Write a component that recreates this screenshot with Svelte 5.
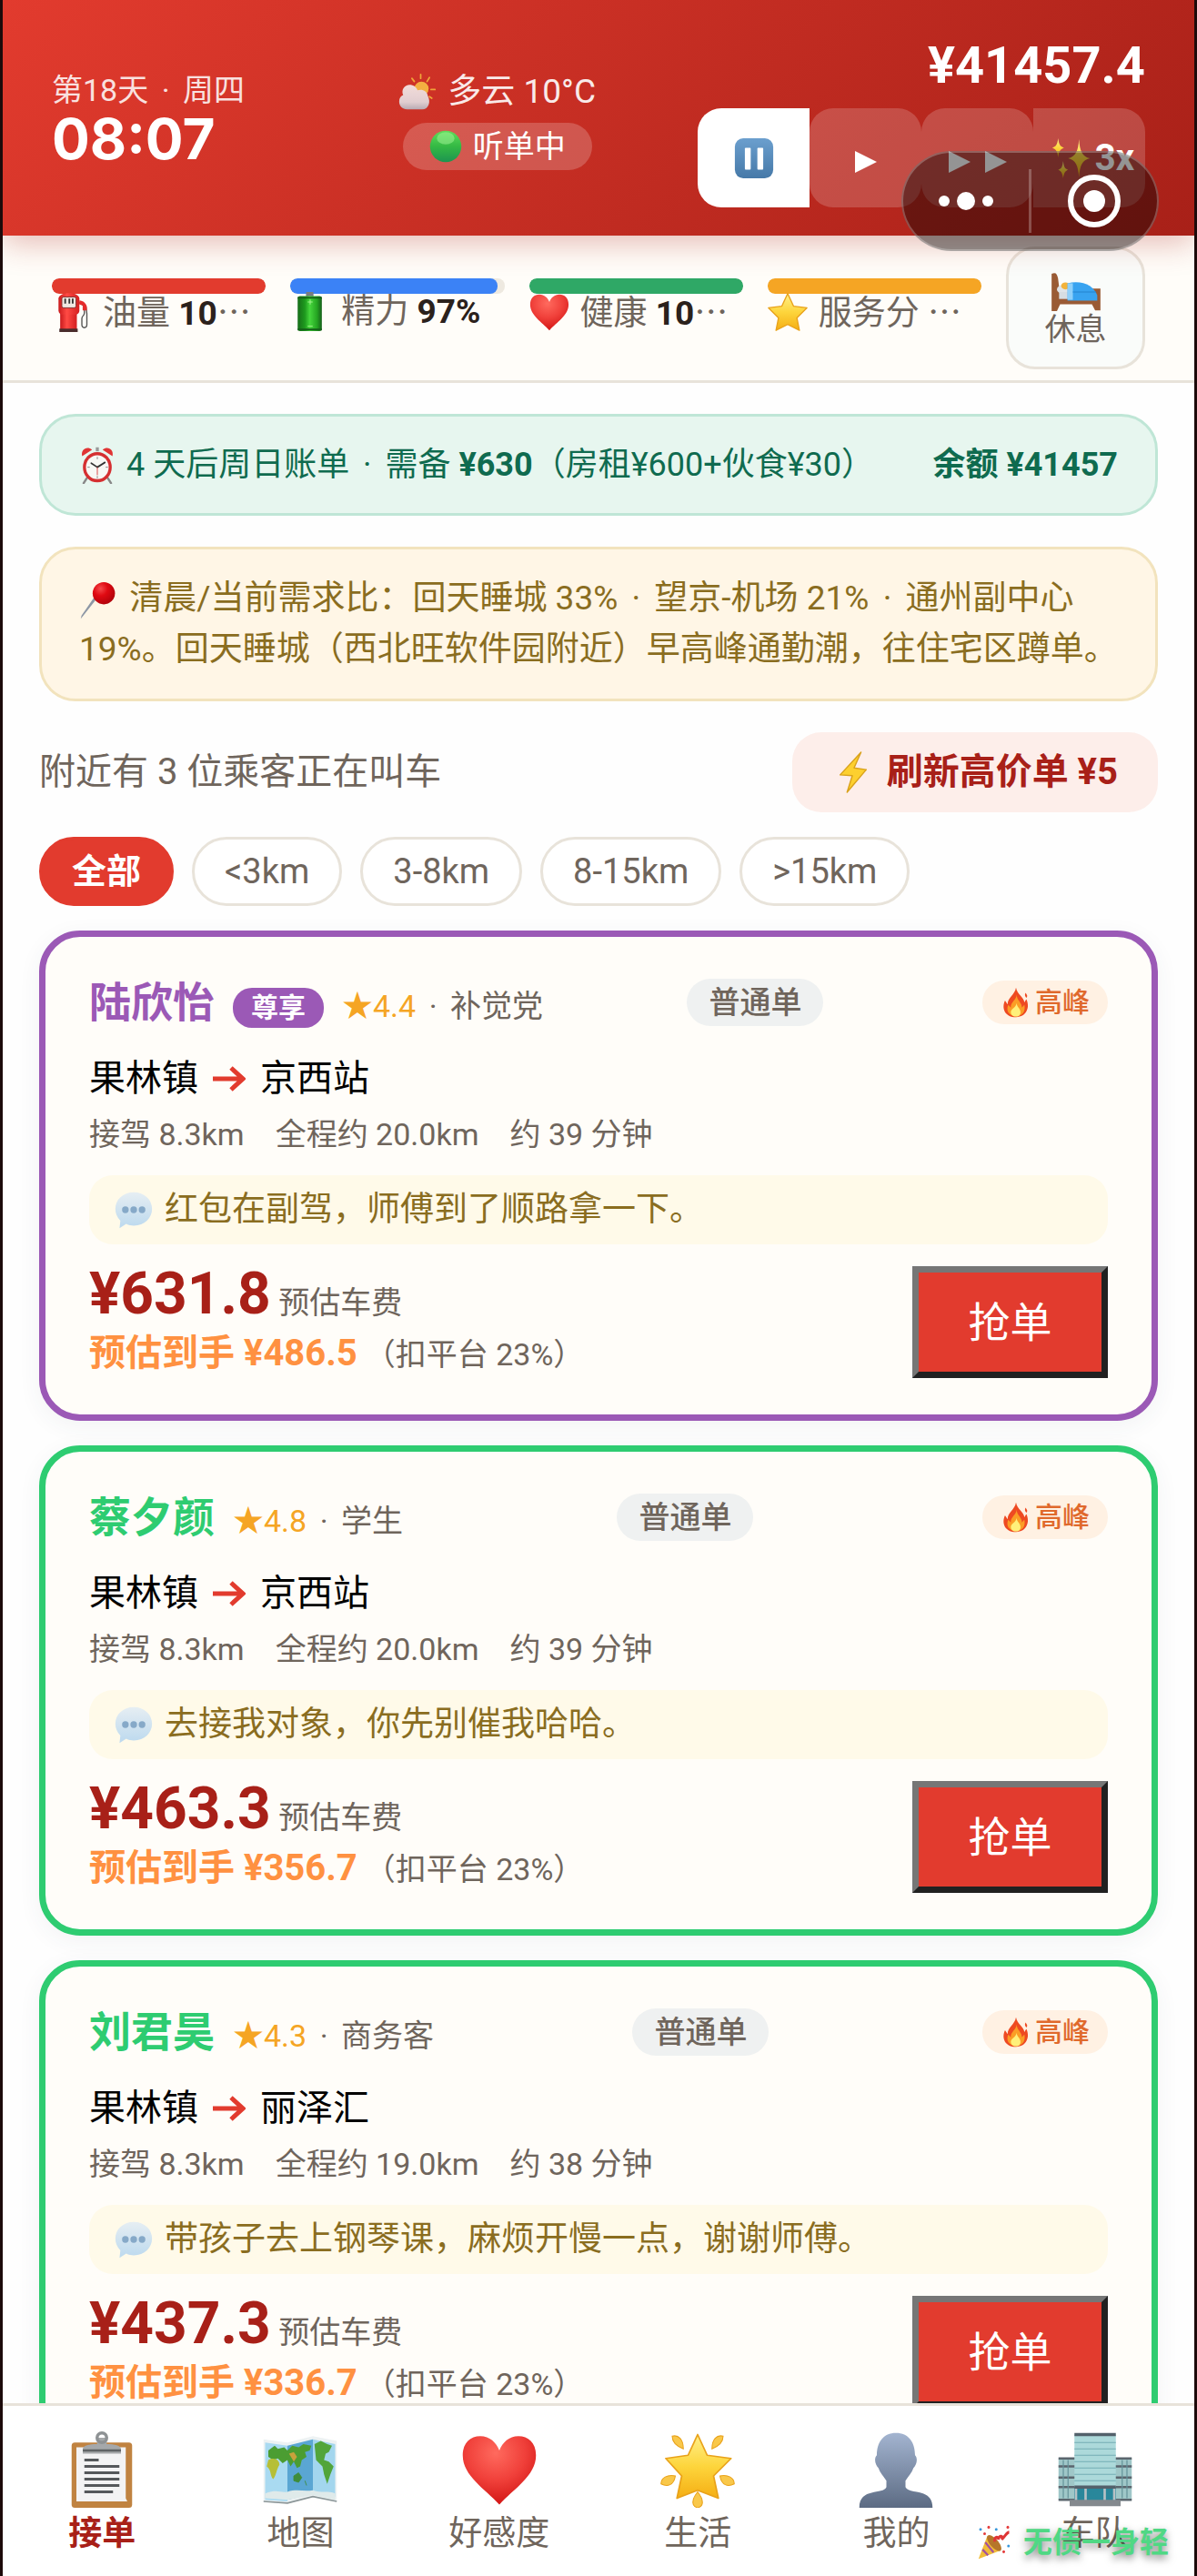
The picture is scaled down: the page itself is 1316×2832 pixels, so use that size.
<script>
  const speeds = ['pause', 'play', 'fast', 'turbo'];
  const speedLabels = { pause: '暂停', play: '正常速度', fast: '两倍速度' };

  let speed = $state('pause');
  let filter = $state('全部');
  let tab = $state('接单');

  const stats = [
    { icon: 'fuel', label: '油量', value: '10', cut: true, percent: 100, color: '#e23b2e' },
    { icon: 'battery', label: '精力', value: '97%', cut: false, percent: 97, color: '#3b82f6' },
    { icon: 'heart', label: '健康', value: '10', cut: true, percent: 100, color: '#2fa866' },
    { icon: 'star', label: '服务分', value: '', cut: true, percent: 100, color: '#f5a524' }
  ];

  const filters = ['全部', '<3km', '3-8km', '8-15km', '>15km'];

  const orders = [
    {
      name: '陆欣怡', vip: true, rating: '4.4', kind: '补觉党',
      from: '果林镇', to: '京西站', trip: '20.0', minutes: 39,
      note: '红包在副驾，师傅到了顺路拿一下。', fare: '631.8', net: '486.5'
    },
    {
      name: '蔡夕颜', vip: false, rating: '4.8', kind: '学生',
      from: '果林镇', to: '京西站', trip: '20.0', minutes: 39,
      note: '去接我对象，你先别催我哈哈。', fare: '463.3', net: '356.7'
    },
    {
      name: '刘君昊', vip: false, rating: '4.3', kind: '商务客',
      from: '果林镇', to: '丽泽汇', trip: '19.0', minutes: 38,
      note: '带孩子去上钢琴课，麻烦开慢一点，谢谢师傅。', fare: '437.3', net: '336.7'
    }
  ];

  const tabs = [
    { icon: 'clipboard', label: '接单' },
    { icon: 'map', label: '地图' },
    { icon: 'heart', label: '好感度' },
    { icon: 'glow', label: '生活' },
    { icon: 'person', label: '我的' },
    { icon: 'building', label: '车队' }
  ];
</script>

<svelte:head>
  <title>接单</title>
</svelte:head>

{#snippet dot()}<span class="dot">·</span>{/snippet}

{#snippet icon(name)}
  <svg class="icon" viewBox="0 0 48 48" preserveAspectRatio="none" aria-hidden="true">
    {#if name === 'weather'}
      <g stroke="#f3b13c" stroke-width="2" stroke-linecap="round">
        <path d="M28 2v5M17 7l3 4M39 6l-3 5M46 21h-5M42 32l-3-2" />
      </g>
      <circle cx="29" cy="20" r="9" fill="#f8bd45" />
      <path d="M11 46c-6 0-10-4-10-10 0-4 2-7 5-8-3-7 2-13 8-13 5 0 9 3 10 7 6-2 12 1 13 7 4 7 1 17-7 17z" fill="url(#g-cloud)" />
    {:else if name === 'dot'}
      <circle cx="24" cy="24" r="23" fill="url(#g-dot)" />
      <ellipse cx="24" cy="12" rx="13" ry="9" fill="#a5f59a" opacity=".5" />
    {:else if name === 'pause'}
      <rect x="1" y="1" width="46" height="46" rx="10" fill="url(#g-blue)" />
      <rect x="13" y="12" width="7" height="25" rx="1" fill="#fff" />
      <rect x="28" y="12" width="7" height="25" rx="1" fill="#fff" />
    {:else if name === 'sparkles'}
      <g fill="url(#g-gold)">
        <path d="M33 2c1 14 4 20 13 22-9 2-12 8-13 22-1-14-4-20-13-22 9-2 12-8 13-22z" />
        <path d="M8 1c1 7 2 9 7 11-5 2-6 4-7 11-1-7-2-9-7-11 5-2 6-4 7-11z" />
        <path d="M14 27c1 7 2 9 6 10-4 2-5 4-6 10-1-6-2-8-6-10 4-1 5-3 6-10z" />
      </g>
    {:else if name === 'fuel'}
      <path d="M32 12l7 5v8c0 4-3 3-3 7v7c0 5 6 5 6 0V26l-1-8" fill="none" stroke="#555" stroke-width="1.5" />
      <path d="M33 10c4 0 9 4 9 8v4h-5v-6l-4-1z" fill="#e52b2b" />
      <rect x="10" y="24" width="20" height="21" fill="url(#g-red)" />
      <path d="M8 8c0-9 25-9 25 0v14c0 4-3 5-5 5H13c-3 0-5-2-5-5z" fill="url(#g-red)" />
      <rect x="12" y="6" width="17" height="13" rx="2" fill="#f0e8e2" stroke="#7b2a2a" />
      <path d="M16 8v6M21 8v6M25 8v6" stroke="#333" stroke-width="2" />
      <rect x="9" y="44" width="22" height="4" fill="#4a2c2c" />
    {:else if name === 'battery'}
      <rect x="19" y="0" width="9" height="7" rx="1" fill="#777d80" />
      <rect x="9" y="5" width="29" height="42" rx="3" fill="url(#g-battery)" />
      <path d="M9 7h29M9 45h29" stroke="#155f19" stroke-width="2" />
      <path d="M21 12h6M24 9v6M21 41h6" stroke="#a6f58f" />
    {:else if name === 'heart'}
      <path d="M24 46C15 36 1 28 1 15 1 7 6 3 12 3c6 0 10 4 12 9 2-5 6-9 12-9 6 0 11 4 11 12 0 13-14 21-23 31z" fill="url(#g-heart)" />
    {:else if name === 'star'}
      <path d="M24 2l7 15 16 2-12 12 3 15-14-7-14 7 3-15L1 19l16-2z" fill="url(#g-gold)" stroke="#e9a21a" stroke-width="1.5" stroke-linejoin="round" />
    {:else if name === 'bed'}
      <path d="M1 3c4-2 5 0 6 5l2 19h30v-7h8v25h-5l-3-7H9l-3 8H1z" fill="#9a5b35" />
      <ellipse cx="12" cy="21" rx="6" ry="5" fill="#dfe4e8" />
      <circle cx="14" cy="17" r="4" fill="#f2b33b" />
      <path d="M8 24h12v8H8z" fill="#d7dde2" />
      <path d="M16 14c14-4 25 3 28 14v6H16z" fill="#38a3f0" />
      <path d="M16 14h5v19h-5z" fill="#8fd0fa" />
      <path d="M21 24h22" stroke="#2283cc" />
    {:else if name === 'alarm'}
      <path d="M10 41l-4 6M38 41l4 6" stroke="#888" stroke-width="3" stroke-linecap="round" />
      <path d="M4 13c-2-8 6-13 13-8zM44 13c2-8-6-13-13-8z" fill="#e03434" />
      <path d="M24 2v5" stroke="#999" stroke-width="4" />
      <circle cx="24" cy="27" r="19" fill="#d52f31" />
      <circle cx="24" cy="27" r="15" fill="#f8f8f5" />
      <path d="M24 27l-8-5M24 27l10-6" stroke="#333" stroke-width="2" stroke-linecap="round" />
      <path d="M24 27v10" stroke="#d52f31" />
      <path d="M24 14v3M24 38v3M11 27h3M35 27h3" stroke="#777" />
    {:else if name === 'pin'}
      <path d="M22 22L3 46l-1 1 1-4 16-23z" fill="#8d97a5" />
      <circle cx="31" cy="15" r="14" fill="url(#g-pin)" />
    {:else if name === 'bolt'}
      <path d="M33 1L9 27l14 1-6 19 22-26-14-2z" fill="#fdd02f" stroke="#d9a21c" stroke-width="1.5" stroke-linejoin="round" />
    {:else if name === 'fire'}
      <path d="M24 1c2 11 12 14 13 23l3-5c6 12 1 27-16 28C7 47 1 33 7 21l4 6c0-11 11-14 13-26z" fill="#ee4a22" />
      <path d="M39 9c3 4 3 6 1 8-2-3-3-5-1-8z" fill="#ee4a22" />
      <path d="M25 12c0 9 9 13 8 20l4-4c2 9-2 17-13 18-11-1-16-9-12-18l4 4c-1-8 9-12 9-20z" fill="#fb9d26" />
      <path d="M25 25c0 6 6 8 6 14 0 5-3 7-7 7s-8-2-8-7c0-5 8-7 9-14z" fill="#fff07a" />
    {:else if name === 'bubble'}
      <path d="M24 3c13 0 22 9 22 20s-9 20-22 20c-3 0-6 0-9-2L7 46l1-9C4 33 2 28 2 23 2 12 11 3 24 3z" fill="url(#g-bubble)" />
      <g fill="#86a9c8"><circle cx="14" cy="24" r="4" /><circle cx="24" cy="24" r="4" /><circle cx="34" cy="24" r="4" /></g>
    {:else if name === 'clipboard'}
      <rect x="5" y="7" width="38" height="41" rx="2" fill="#c08341" />
      <path d="M8 10h31v32l1 2H8z" fill="#f3f3f4" />
      <path d="M12 11c0-2 4-3 9-3V4h6v4c5 0 9 1 9 3v3H12z" fill="#a5a8aa" />
      <path d="M12 12h24" stroke="#5f6365" stroke-width="1.5" />
      <circle cx="24" cy="4" r="3" fill="none" stroke="#8e9294" stroke-width="2" />
      <path d="M13 18h9M13 22h22M13 26h22M13 30h22M13 34h22M13 38h18" stroke="#55585b" stroke-width="1.6" />
    {:else if name === 'map'}
      <path d="M1 5l15 2 16-4 15 3v38l-15-3-16 4-15-1z" fill="#edf2f3" />
      <path d="M2 7l14 2v35l-14-1z" fill="#a9daf1" />
      <path d="M16 9l16-4v34l-16 4z" fill="#5aa6d3" />
      <path d="M32 5l14 3v33l-14-3z" fill="#a3d6ee" />
      <path d="M4 12l4-3 2 2 4-1 2 2 3-3 4 1 3-2 5 1-1 3-3 1 1 3-3 2-1 4-2 1-2-4-2 3-2-4-3 2-3-3-3 1-3-2z" fill="#4b9d32" />
      <path d="M4 18c4-2 7 0 7 3-2 3-2 7-4 9-2-2-1-6-4-8z" fill="#b6bf37" />
      <path d="M17 14l3-1 2 3-2 3z" fill="#c9a13c" />
      <path d="M33 8l4-2 4 2 3 1-2 4-2 1-1 4 3 1 3 3-2 5-2 6-2-6-1-5-4-4z" fill="#52a53a" />
      <path d="M20 28l3-2 2 3-2 3-3-1zM27 31l1 3" fill="#3f8d3a" stroke="#3f8d3a" stroke-width=".5" />
      <path d="M2 39c8-3 10 0 14-1 6-2 10 0 16-1 5 2 10 0 14 2v4l-14-3-16 3-14-1z" fill="#dfeaea" />
      <path d="M1 44l15 1 16-4 15 3" fill="none" stroke="#8b9698" />
    {:else if name === 'glow'}
      <path d="M24 2l6 13 15 2-11 11 3 14-13-5-13 5 3-14L4 17l14-2z" fill="url(#g-gold)" stroke="#e9a21a" stroke-linejoin="round" />
      <g fill="#f9c84a" stroke="#e9a21a" stroke-width=".6">
        <path d="M15 11c-5-2-7-5-7-8 4-1 7 2 7 8z" /><path d="M33 11c5-2 7-5 7-8-4-1-7 2-7 8z" />
        <path d="M10 28c-1 6-5 7-9 5 0-4 4-6 9-5z" /><path d="M38 28c1 6 5 7 9 5 0-4-4-6-9-5z" />
        <path d="M24 38c4 5 4 9 0 10-4-1-4-5 0-10z" />
      </g>
    {:else if name === 'person'}
      <path d="M24 1c8 0 12 6 12 14 2 2 1 6-1 8-1 3-3 5-5 8v4c2 5 17 0 17 13H1c0-13 15-8 17-13v-4c-2-3-4-5-5-8-2-2-3-6-1-8 0-8 4-14 12-14z" fill="url(#g-person)" />
    {:else if name === 'building'}
      <rect x="1" y="17" width="46" height="26" fill="#9fc7c8" />
      <path d="M1 17h46M1 22h46M1 29h46M1 35h46M1 43h46" stroke="#5b666e" stroke-width="1.5" />
      <path d="M4 18v24M7 18v24M41 18v24M44 18v24" stroke="#65949a" stroke-width=".7" />
      <rect x="11" y="2" width="26" height="33" fill="#acd9da" />
      <path d="M11 7h26M11 11h26M11 15h26M11 19h26M11 23h26M11 27h26M11 31h26" stroke="#73adb4" stroke-width=".7" />
      <path d="M11 2h26M11 35h26" stroke="#53616b" stroke-width="2" />
      <rect x="11" y="36" width="26" height="8" fill="#29879b" />
      <path d="M12 36v8M18 36v8M30 36v8M36 36v8" stroke="#b7c1c4" stroke-width="1.5" />
      <rect x="8" y="43" width="32" height="4" fill="#84898e" />
    {:else if name === 'party'}
      <path d="M14 15l20 20L1 47z" fill="#f1bd38" />
      <path d="M11 24l12 14M7 34l8 8" stroke="#a3529d" stroke-width="3" />
      <ellipse cx="24" cy="25" rx="6" ry="14" transform="rotate(-43 24 25)" fill="#b5762a" />
      <path d="M25 23c-1-7 5-8 5-3 2-7 8-5 5 0 6-5 7-10 11-10" fill="none" stroke="#df3535" stroke-width="4" />
      <g fill="#3998dc"><circle cx="4" cy="6" r="2" /><circle cx="27" cy="6" r="2" /><circle cx="45" cy="29" r="2" /></g>
      <g fill="#e43c3c"><circle cx="16" cy="3" r="2" /><circle cx="10" cy="12" r="2" /><circle cx="38" cy="37" r="2" /><circle cx="44" cy="3" r="2" /></g>
    {/if}
  </svg>
{/snippet}

<svg class="defs" aria-hidden="true">
  <defs>
    <linearGradient id="g-cloud" x2="0" y2="1"><stop stop-color="#f7eeee" /><stop offset=".7" stop-color="#e4e0e3" /><stop offset="1" stop-color="#b6b8c3" /></linearGradient>
    <linearGradient id="g-dot" x2="0" y2="1"><stop stop-color="#5fdc5a" /><stop offset=".5" stop-color="#34b944" /><stop offset="1" stop-color="#1d9450" /></linearGradient>
    <linearGradient id="g-blue" x2="0" y2="1"><stop stop-color="#6b9fce" /><stop offset="1" stop-color="#4679a8" /></linearGradient>
    <linearGradient id="g-gold" x2="0" y2="1"><stop stop-color="#fff08a" /><stop offset=".5" stop-color="#fdd53c" /><stop offset="1" stop-color="#f5ae14" /></linearGradient>
    <linearGradient id="g-red"><stop stop-color="#c9191c" /><stop offset=".4" stop-color="#ff4a44" /><stop offset="1" stop-color="#d41f20" /></linearGradient>
    <linearGradient id="g-battery"><stop stop-color="#176e19" /><stop offset=".3" stop-color="#1e9a1e" /><stop offset=".5" stop-color="#45d63c" /><stop offset=".8" stop-color="#25a522" /><stop offset="1" stop-color="#155f19" /></linearGradient>
    <radialGradient id="g-heart" cx=".45" cy=".25" r=".8"><stop stop-color="#ff6a5e" /><stop offset=".5" stop-color="#f0403a" /><stop offset="1" stop-color="#cf1010" /></radialGradient>
    <radialGradient id="g-pin" cx=".35" cy=".3" r=".8"><stop stop-color="#f5494b" /><stop offset=".4" stop-color="#e00a12" /><stop offset="1" stop-color="#a90009" /></radialGradient>
    <linearGradient id="g-bubble" x2="0" y2="1"><stop stop-color="#e6eef3" /><stop offset="1" stop-color="#bcd9ee" /></linearGradient>
    <linearGradient id="g-person" x2="0" y2="1"><stop stop-color="#a3b4d0" /><stop offset="1" stop-color="#5c6b83" /></linearGradient>
  </defs>
</svg>

<div class="app">
  <header class="topbar">
    <div class="clock">
      <div class="clock__day">第18天 {@render dot()} 周四</div>
      <time class="clock__time">08:07</time>
    </div>
    <div class="status">
      <div class="status__weather">{@render icon('weather')}多云 10°C</div>
      <div class="status__pill">{@render icon('dot')}听单中</div>
    </div>
    <div class="wallet">
      <div class="wallet__money">¥41457.4</div>
      <div class="speeds">
        {#each speeds as s}
          <button class="speed" class:speed--on={speed === s} aria-label={speedLabels[s]} onclick={() => (speed = s)}>
            {#if s === 'pause'}
              {@render icon('pause')}
            {:else if s === 'turbo'}
              {@render icon('sparkles')}3x
            {:else}
              <svg class="tri" viewBox="0 0 24 24"><path d="M0 0l24 12L0 24z" fill="currentColor" /></svg>
              {#if s === 'fast'}
                <svg class="tri" viewBox="0 0 24 24"><path d="M0 0l24 12L0 24z" fill="currentColor" /></svg>
              {/if}
            {/if}
          </button>
        {/each}
      </div>
    </div>
  </header>

  <!-- Mini-program capsule floats over the header -->
  <div class="capsule">
    <button class="capsule__btn" aria-label="更多">
      <svg viewBox="0 0 60 60"><g fill="#fff"><circle cx="6" cy="30" r="6" /><circle cx="30" cy="30" r="10" /><circle cx="54" cy="30" r="6" /></g></svg>
    </button>
    <span class="capsule__line"></span>
    <button class="capsule__btn" aria-label="关闭">
      <svg viewBox="0 0 60 60"><circle cx="30" cy="30" r="26" fill="none" stroke="#fff" stroke-width="6" /><circle cx="30" cy="30" r="12" fill="#fff" /></svg>
    </button>
  </div>

  <section class="stats">
    {#each stats as stat}
      <div class="stat">
        <div class="stat__track">
          <div class="stat__fill" style="width: {stat.percent}%; background: {stat.color}"></div>
        </div>
        <div class="stat__label">
          {@render icon(stat.icon)}
          <span>{stat.label} <b>{stat.value}</b>{#if stat.cut}<span class="stat__cut">…</span>{/if}</span>
        </div>
      </div>
    {/each}
    <button class="rest">{@render icon('bed')}休息</button>
  </section>

  <main class="content">
    <div class="notice notice--bill">
      <span class="notice__text">{@render icon('alarm')}<span>4 天后周日账单 {@render dot()} 需备 <b>¥630</b>（房租¥600+伙食¥30）</span></span>
      <b>余额 ¥41457</b>
    </div>
    <div class="notice notice--demand">
      <p>
        {@render icon('pin')}
        清晨/当前需求比：回天睡城 33% {@render dot()} 望京-机场 21% {@render dot()} 通州副中心 19%。回天睡城（西北旺软件园附近）早高峰通勤潮，往住宅区蹲单。
      </p>
    </div>

    <div class="nearby">
      <span>附近有 3 位乘客正在叫车</span>
      <button class="refresh">{@render icon('bolt')}刷新高价单 ¥5</button>
    </div>

    <div class="chips">
      {#each filters as f}
        <button class="chip" class:chip--on={filter === f} onclick={() => (filter = f)}>{f}</button>
      {/each}
    </div>

    <div class="orders">
      {#each orders as order}
        <article class="order" class:order--vip={order.vip}>
          <div class="order__head">
            <div class="order__who">
              <h2 class="order__name">{order.name}</h2>
              {#if order.vip}<span class="order__vip">尊享</span>{/if}
              <span class="order__kind"><span class="order__rating">★{order.rating}</span> {@render dot()} {order.kind}</span>
            </div>
            <span class="order__type">普通单</span>
            <span class="order__peak">{@render icon('fire')}高峰</span>
          </div>
          <div class="order__route">
            {order.from}
            <svg class="order__arrow" viewBox="0 0 36 32" aria-label="到"><path d="M0 16h32M20 4l13 12-13 12" fill="none" stroke="currentColor" stroke-width="5" /></svg>
            {order.to}
          </div>
          <div class="order__meta">
            <span>接驾 8.3km</span>
            <span>全程约 {order.trip}km</span>
            <span>约 {order.minutes} 分钟</span>
          </div>
          <div class="order__note">{@render icon('bubble')}{order.note}</div>
          <div class="order__foot">
            <div>
              <div class="order__fare"><strong>¥{order.fare}</strong> 预估车费</div>
              <div class="order__net"><strong>预估到手 ¥{order.net}</strong>（扣平台 23%）</div>
            </div>
            <button class="grab">抢单</button>
          </div>
        </article>
      {/each}
    </div>
  </main>

  <nav class="tabs">
    {#each tabs as t}
      <button class="tab" class:tab--on={tab === t.label} onclick={() => (tab = t.label)}>
        {@render icon(t.icon)}
        {t.label}
      </button>
    {/each}
  </nav>

  <div class="badge">{@render icon('party')}无债一身轻</div>
</div>

<style>
  :global(body) {
    background: #fff;
  }

  .defs {
    position: absolute;
    width: 0;
    height: 0;
  }

  .icon {
    width: 48px;
    height: 48px;
    flex: none;
  }

  .dot {
    margin: 0 6px;
  }

  .app {
    position: relative;
    box-sizing: border-box;
    height: 100vh;
    display: flex;
    flex-direction: column;
    overflow: hidden;
    border: solid #1c0a0a;
    border-width: 0 3px;
    background: #fefefe;
    color: #6f655c;
    font-family: Roboto, 'Noto Sans CJK SC', sans-serif;
    font-size: 34px;
    line-height: 44px;
  }

  button {
    font: inherit;
    color: inherit;
    border: 0;
    padding: 0;
    margin: 0;
    cursor: pointer;
  }

  /* Header */
  .topbar {
    position: relative;
    z-index: 1;
    display: flex;
    align-items: center;
    gap: 112px;
    padding: 38px 54px 31px;
    color: #fff;
    background: linear-gradient(135deg, #e23b2e, #a82018);
    box-shadow: 0 8px 32px rgba(168, 32, 24, 0.3);
  }

  .clock {
    margin-right: auto;
  }

  .clock__day {
    opacity: 0.85;
  }

  .clock__time {
    display: block;
    padding-bottom: 4px;
    font-family: Inter, sans-serif;
    font-size: 62px;
    font-weight: 700;
    line-height: 64px;
  }

  .status {
    display: flex;
    flex-direction: column;
    align-items: center;
    gap: 12px;
  }

  .status__weather {
    display: flex;
    align-items: center;
    gap: 12px;
    font-size: 37px;
    opacity: 0.9;
  }

  .status__weather .icon {
    width: 42px;
    height: 42px;
  }

  .status__pill {
    display: flex;
    align-items: center;
    gap: 12px;
    padding: 4px 29px;
    border-radius: 26px;
    background: rgba(255, 255, 255, 0.2);
  }

  .status__pill .icon {
    width: 36px;
    height: 36px;
  }

  .wallet__money {
    margin-bottom: 13px;
    font-size: 56px;
    font-weight: 700;
    line-height: 68px;
    text-align: right;
  }

  .speeds {
    display: flex;
  }

  .speed {
    display: flex;
    align-items: center;
    justify-content: center;
    gap: 4px;
    width: 123px;
    height: 109px;
    border-radius: 26px;
    background: rgba(255, 255, 255, 0.18);
    color: #fff;
    font-size: 40px;
    font-weight: 700;
  }

  .speed:first-child {
    border-radius: 26px 0 0 26px;
  }

  .speed:last-child {
    border-radius: 0 26px 26px 0;
    padding-left: 8px;
  }

  .speed--on {
    background: #fff;
  }

  .speed .icon {
    width: 44px;
    height: 46px;
  }

  .tri {
    width: 24px;
    height: 24px;
    margin: 8px 6px 0;
  }

  .capsule {
    position: absolute;
    z-index: 2;
    top: 166px;
    right: 39px;
    box-sizing: border-box;
    display: flex;
    align-items: center;
    width: 283px;
    height: 110px;
    border: 2px solid rgba(255, 255, 255, 0.25);
    border-radius: 55px;
    background: rgba(0, 0, 0, 0.42);
  }

  .capsule__btn {
    flex: 1;
    display: flex;
    justify-content: center;
    background: none;
  }

  .capsule__btn svg {
    width: 60px;
    height: 60px;
  }

  .capsule__line {
    width: 3px;
    height: 70px;
    background: rgba(255, 255, 255, 0.25);
  }

  /* Stats */
  .stats {
    display: flex;
    align-items: center;
    gap: 27px;
    padding: 12px 54px;
    border-bottom: 3px solid #e8e3da;
    background: #fffdf9;
  }

  .stat {
    flex: 1;
    min-width: 0;
    padding-bottom: 8px;
  }

  .stat__track {
    height: 17px;
    border-radius: 8px;
    background: #eee9e0;
    overflow: hidden;
  }

  .stat__fill {
    height: 100%;
    border-radius: 8px;
  }

  .stat__label {
    display: flex;
    align-items: center;
    gap: 12px;
    height: 40px;
    font-size: 37px;
    white-space: nowrap;
  }

  .stat__label .icon {
    width: 44px;
    height: 44px;
  }

  .stat__label b {
    color: #2b211c;
  }

  .stat__cut {
    font-family: 'Noto Sans CJK SC', sans-serif;
  }

  .rest {
    box-sizing: border-box;
    display: flex;
    flex-direction: column;
    align-items: center;
    justify-content: center;
    width: 153px;
    height: 135px;
    border: 3px solid #e8e3da;
    border-radius: 32px;
    background: #fafcfa;
    line-height: 36px;
  }

  .rest .icon {
    width: 56px;
    height: 46px;
  }

  /* Content */
  .content {
    flex: 1;
    min-height: 0;
    overflow: hidden;
    padding: 34px 40px 0;
  }

  .notice {
    margin-bottom: 34px;
    padding: 25px 41px;
    border: 3px solid;
    border-radius: 40px;
    line-height: 56px;
  }

  .notice p {
    margin: 0;
  }

  .notice--bill {
    display: flex;
    justify-content: space-between;
    color: #0f6b4f;
    background: #e7f6ef;
    border-color: #bfe6d6;
    font-size: 36px;
  }

  .notice__text {
    display: flex;
    align-items: center;
  }

  .notice--bill .icon {
    width: 40px;
    height: 42px;
    margin-right: 12px;
  }

  .notice--demand {
    padding-top: 26px;
    padding-bottom: 26px;
    color: #8a6d1f;
    background: #fff6e6;
    border-color: #f2e3bd;
    font-size: 37px;
  }

  .notice--demand .icon {
    width: 42px;
    height: 42px;
    margin-right: 4px;
    vertical-align: middle;
  }

  .nearby {
    display: flex;
    align-items: center;
    justify-content: space-between;
    font-size: 40px;
  }

  .refresh {
    display: flex;
    align-items: center;
    gap: 14px;
    padding: 21px 44px;
    border-radius: 32px;
    background: #fdeeea;
    color: #a82018;
    font-weight: 700;
  }

  .refresh .icon {
    width: 46px;
    height: 46px;
  }

  .chips {
    display: flex;
    gap: 20px;
    margin: 27px 0;
  }

  .chip {
    padding: 13px 33px;
    border: 3px solid #e8e3da;
    border-radius: 38px;
    background: #fff;
    font-size: 38px;
  }

  .chip--on {
    border-color: #e23b2e;
    background: #e23b2e;
    color: #fff;
    font-weight: 700;
  }

  /* Orders */
  .orders {
    display: flex;
    flex-direction: column;
    gap: 27px;
  }

  .order {
    padding: 40px 48px;
    border: 7px solid #2ecc71;
    border-radius: 45px;
    background: #fffdf9;
    box-shadow: 0 6px 26px rgba(44, 62, 80, 0.06);
  }

  .order--vip {
    border-color: #9b59b6;
  }

  .order__head {
    display: flex;
    align-items: center;
    justify-content: space-between;
    height: 64px;
    margin-bottom: 26px;
  }

  .order__who {
    display: flex;
    align-items: baseline;
    gap: 20px;
  }

  .order__name {
    margin: 0;
    color: #2ecc71;
    font-size: 46px;
    font-weight: 700;
    line-height: 64px;
  }

  .order--vip .order__name {
    color: #9b59b6;
  }

  .order__vip {
    padding: 0 20px;
    border-radius: 21px;
    background: #9b59b6;
    color: #fff;
    font-size: 30px;
    font-weight: 700;
  }

  .order__rating {
    color: #f5a524;
  }

  .order__type {
    margin-right: 16px;
    padding: 4px 24px;
    border-radius: 26px;
    background: #eff1f1;
    font-weight: 500;
  }

  .order__peak {
    display: flex;
    align-items: center;
    gap: 4px;
    padding: 2px 20px;
    border-radius: 24px;
    background: #fff1e3;
    color: #e0692c;
    font-size: 30px;
    font-weight: 500;
  }

  .order__peak .icon {
    width: 34px;
    height: 34px;
  }

  .order__route {
    display: flex;
    align-items: center;
    gap: 16px;
    color: #000;
    font-size: 40px;
    line-height: 52px;
  }

  .order__arrow {
    width: 36px;
    height: 32px;
    color: #e23b2e;
  }

  .order__meta {
    display: flex;
    gap: 34px;
    margin: 13px 0 23px;
  }

  .order__note {
    display: flex;
    align-items: center;
    gap: 12px;
    margin-bottom: 24px;
    padding: 16px 27px;
    border-radius: 26px;
    background: #fffae9;
    color: #8a6d1f;
    font-size: 37px;
  }

  .order__note .icon {
    width: 44px;
    height: 44px;
  }

  .order__foot {
    display: flex;
    align-items: center;
    justify-content: space-between;
  }

  .order__fare {
    line-height: 60px;
  }

  .order__fare strong {
    color: #a82018;
    font-size: 64px;
  }

  .order__net {
    line-height: 52px;
  }

  .order__net strong {
    margin-right: 8px;
    color: #ff9141;
    font-size: 40px;
  }

  .grab {
    width: 215px;
    height: 123px;
    border: 7px solid;
    border-color: #767676 #212121 #212121 #767676;
    background: #e23b2e;
    color: #fff;
    font-size: 46px;
  }

  /* Bottom navigation */
  .tabs {
    display: flex;
    border-top: 3px solid #e8e3da;
    background: #fff;
  }

  .tab {
    flex: 1;
    display: flex;
    flex-direction: column;
    align-items: center;
    gap: 7px;
    padding: 28px 0 24px;
    background: none;
    font-size: 37px;
  }

  .tab .icon {
    width: 84px;
    height: 84px;
  }

  .tab--on {
    color: #a82018;
    font-weight: 700;
  }

  .badge {
    position: absolute;
    right: 28px;
    bottom: 15px;
    display: flex;
    align-items: center;
    gap: 14px;
    color: #4fd884;
    font-size: 32px;
    font-weight: 700;
    text-shadow: 0 4px 8px rgba(0, 0, 0, 0.5);
    pointer-events: none;
  }

  .badge .icon {
    width: 36px;
    height: 38px;
  }
</style>
